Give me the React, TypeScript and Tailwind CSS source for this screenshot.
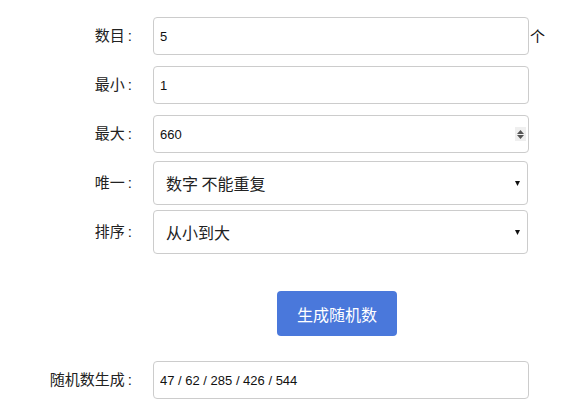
const cjk = "font-['Noto_Sans_CJK_SC','Microsoft_YaHei',sans-serif]";

function Label({ text }: { text: string }) {
  return (
    <label className={`w-[132px] shrink-0 text-right text-[15px] text-[#222] ${cjk}`}>
      {text}
      <span className="ml-[3px] font-['Liberation_Sans',Arial,sans-serif]">:</span>
    </label>
  );
}

function Field({ value, spinner }: { value: string; spinner?: boolean }) {
  return (
    <div className="relative w-[376px]">
      <input
        readOnly
        value={value}
        className="h-[38px] w-full rounded-[4px] border border-[#ccc] bg-white px-[6px] font-['Liberation_Sans',Arial,sans-serif] text-[13px] text-[#111] outline-none"
      />
      {spinner && (
        <div className="absolute right-[3px] top-[12px] flex h-[14px] w-[11px] flex-col items-center justify-center gap-[1px] bg-[#efefef]">
          <svg width="7" height="4" viewBox="0 0 7 4">
            <path d="M0 4L3.5 0L7 4Z" fill="#555" />
          </svg>
          <svg width="7" height="4" viewBox="0 0 7 4">
            <path d="M0 0L3.5 4L7 0Z" fill="#555" />
          </svg>
        </div>
      )}
    </div>
  );
}

function Select({ value }: { value: string }) {
  return (
    <div className="relative w-[375px]">
      <select
        defaultValue={value}
        className={`h-[44px] w-full appearance-none rounded-[4px] border border-[#ccc] bg-white pl-[12px] text-[16px] text-[#222] outline-none ${cjk}`}
      >
        <option>{value}</option>
      </select>
      <svg className="pointer-events-none absolute right-[8px] top-[20px]" width="5" height="5" viewBox="0 0 5 5">
        <path d="M0 0H5L2.5 5Z" fill="#111" />
      </svg>
    </div>
  );
}

export default function App() {
  return (
    <div className="h-[409px] w-[583px] bg-white pt-[17px]">
      <div className="flex items-center gap-[21px]">
        <Label text="数目" />
        <Field value="5" />
        <span className={`-ml-[20px] text-[15px] text-[#111] ${cjk}`}>个</span>
      </div>
      <div className="mt-[11px] flex items-center gap-[21px]">
        <Label text="最小" />
        <Field value="1" />
      </div>
      <div className="mt-[11px] flex items-center gap-[21px]">
        <Label text="最大" />
        <Field value="660" spinner />
      </div>
      <div className="mt-[8px] flex items-center gap-[21px]">
        <Label text="唯一" />
        <Select value="数字 不能重复" />
      </div>
      <div className="mt-[5px] flex items-center gap-[21px]">
        <Label text="排序" />
        <Select value="从小到大" />
      </div>
      <div className="mt-[37px] flex justify-center pl-[91px]">
        <button className={`h-[45px] w-[120px] rounded-[4px] bg-[#4a78db] text-[16px] text-white ${cjk}`}>
          生成随机数
        </button>
      </div>
      <div className="mt-[25px] flex items-center gap-[21px]">
        <Label text="随机数生成" />
        <Field value="47 / 62 / 285 / 426 / 544" />
      </div>
    </div>
  );
}
